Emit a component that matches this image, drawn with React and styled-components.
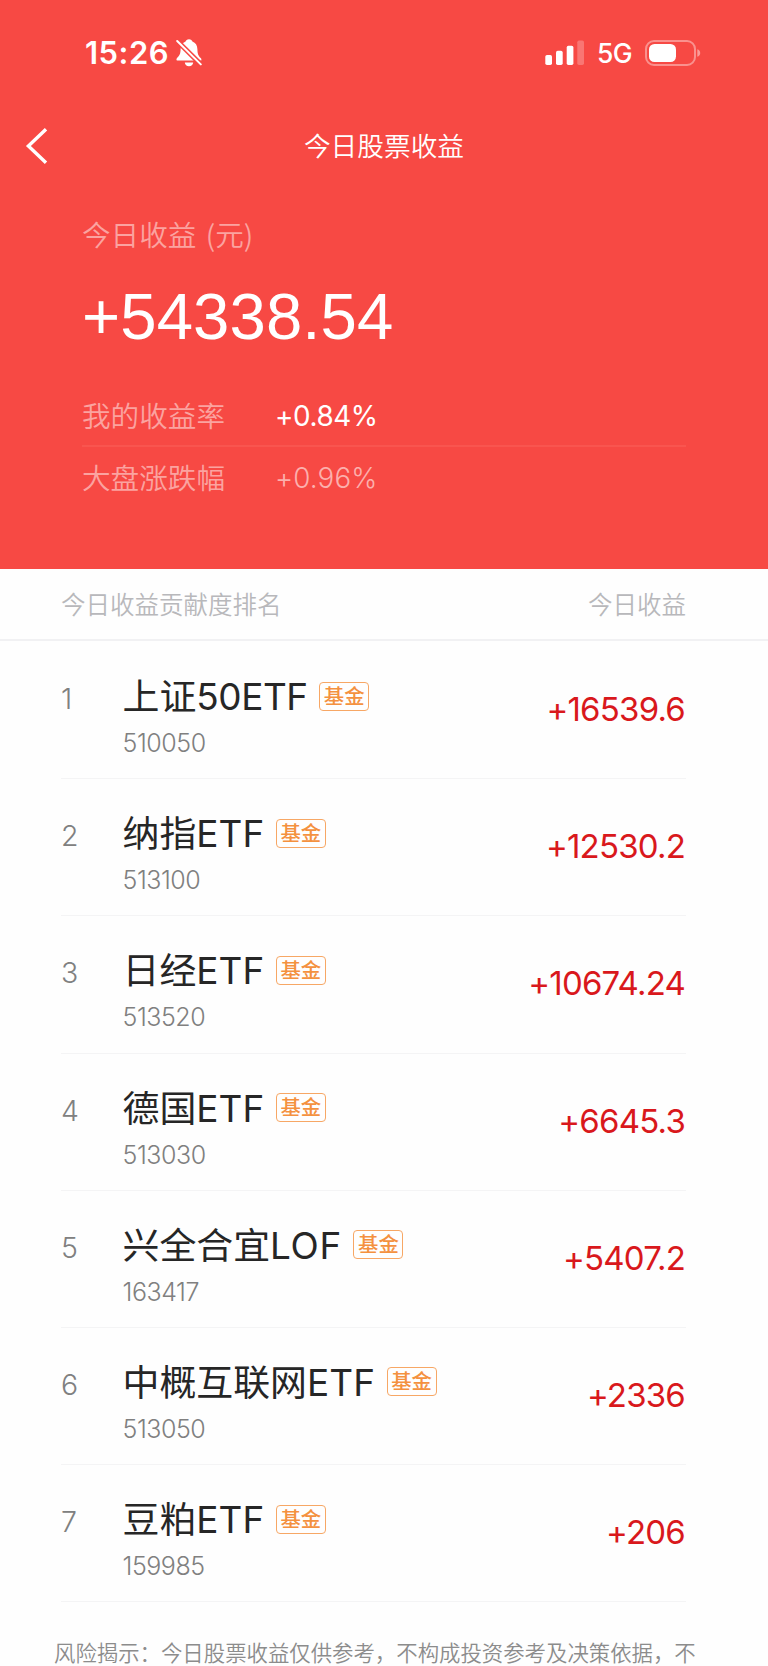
import React from "react";
import styled, { createGlobalStyle } from "styled-components";

const GlobalStyle = createGlobalStyle`
  * {
    box-sizing: border-box;
  }
  body {
    margin: 0;
    background: #fefefe;
    font-family: Inter, "Noto Sans CJK SC", sans-serif;
    -webkit-font-smoothing: antialiased;
  }
`;

const Screen = styled.div`
  width: 768px;
  height: 1666px;
  overflow: hidden;
  background: #fefefe;
`;

const Hero = styled.header`
  height: 569px;
  background: #f74944;
  color: #fff;
`;

const StatusBar = styled.div`
  display: flex;
  align-items: center;
  height: 105px;
  padding: 0 67px 0 85px;
`;

const Clock = styled.span`
  width: 84px;
  margin-right: 7px;
  font-size: 31px;
  font-weight: 600;
  letter-spacing: 0.5px;
  line-height: 36px;
  white-space: nowrap;
`;

const StatusRight = styled.div`
  display: flex;
  align-items: center;
  margin-left: auto;
`;

const Network = styled.span`
  width: 36px;
  margin: 1px 12px 0 12px;
  font-size: 26.5px;
  font-weight: 500;
  letter-spacing: -0.6px;
  line-height: 32px;
`;

const NavBar = styled.nav`
  display: grid;
  grid-template-columns: 80px 1fr 80px;
  align-items: center;
  height: 82px;
`;

const BackButton = styled.button`
  display: flex;
  padding: 0 0 0 25px;
  border: 0;
  background: none;
  color: inherit;
`;

const Title = styled.h1`
  margin: -2px 0 0;
  font-family: "Noto Sans CJK SC", sans-serif;
  font-size: 26.7px;
  font-weight: 350;
  line-height: 40px;
  text-align: center;
`;

const Summary = styled.section`
  padding: 26px 82px 0;
`;

const Label = styled.div`
  font-family: "Noto Sans CJK SC", sans-serif;
  font-size: 28.6px;
  font-weight: 350;
  line-height: 42px;
  word-spacing: 3px;
  color: #fba3a0;
`;

const Total = styled.div`
  margin-top: 24px;
  font-family: "Liberation Sans", Arial, sans-serif;
  font-size: 65.3px;
  letter-spacing: 0.1px;
  line-height: 76px;
`;

const RateRow = styled.div`
  display: flex;
  align-items: center;
  height: ${(props) => (props.$first ? "62px" : "61px")};
  border-bottom: ${(props) => (props.$first ? "2px solid #f9554f" : "0")};

  ${Label} {
    margin-top: -1px;
  }
`;

const Rates = styled.div`
  margin-top: 30px;
`;

const RateValue = styled.span`
  margin-top: 1px;
  margin-left: 50px;
  font-size: 27.8px;
  font-weight: ${(props) => (props.$muted ? 300 : 400)};
  letter-spacing: ${(props) => (props.$muted ? "0.1px" : "-0.4px")};
  color: ${(props) => (props.$muted ? "#fcb0ad" : "#fff")};
`;

const ListHeader = styled.div`
  display: flex;
  justify-content: space-between;
  align-items: center;
  height: 72px;
  padding: 0 82px 1px 61px;
  border-bottom: 2px solid #f1f1f3;
  font-family: "Noto Sans CJK SC", sans-serif;
  font-size: 24.5px;
  font-weight: 350;
  color: #b8b8bb;
`;

const List = styled.ul`
  margin: 0;
  padding: 1px 82px 0 61px;
  list-style: none;
`;

const Row = styled.li`
  display: grid;
  grid-template-columns: 61.5px 1fr auto;
  height: 137.2px;
  border-bottom: 1px solid #f4f4f5;
`;

const Rank = styled.span`
  padding-top: 39px;
  font-size: 28.5px;
  font-weight: 300;
  line-height: 36px;
  color: #808080;
`;

const Fund = styled.div`
  padding-top: 29px;
`;

const NameLine = styled.div`
  display: flex;
  align-items: center;
  height: 52px;
`;

const Name = styled.span`
  font-size: 36.9px;
  line-height: 52px;
  color: #262626;
`;

const NameLatin = styled.span`
  letter-spacing: ${(props) => props.$spacing || "0.1px"};
`;

const Tag = styled.span`
  width: 50px;
  height: 29px;
  margin-top: -2px;
  margin-left: 11.5px;
  border: 1.5px solid #f7a765;
  border-radius: 4px;
  font-family: "Noto Sans CJK SC", sans-serif;
  font-size: 20.4px;
  font-weight: 500;
  line-height: 25px;
  text-align: center;
  white-space: nowrap;
  color: #f4913f;
`;

const Code = styled.div`
  margin-top: 4px;
  font-size: 25px;
  font-weight: 300;
  letter-spacing: -0.45px;
  line-height: 32px;
  color: #808080;
`;

const Gain = styled.span`
  padding-top: 47px;
  padding-right: 1px;
  font-size: 33px;
  letter-spacing: -0.8px;
  line-height: 40px;
  color: #d9181c;
`;

const Notice = styled.p`
  margin: 34px 0 0 54px;
  font-family: "Noto Sans CJK SC", sans-serif;
  font-size: 21.4px;
  font-weight: 350;
  line-height: 32px;
  white-space: nowrap;
  color: #8c8c8c;
`;

const funds = [
  { cn: "上证", en: "50ETF", spacing: "-0.4px", code: "510050", gain: "+16539.6" },
  { cn: "纳指", en: "ETF", code: "513100", gain: "+12530.2" },
  { cn: "日经", en: "ETF", code: "513520", gain: "+10674.24" },
  { cn: "德国", en: "ETF", code: "513030", gain: "+6645.3" },
  { cn: "兴全合宜", en: "LOF", spacing: "0.7px", code: "163417", gain: "+5407.2" },
  { cn: "中概互联网", en: "ETF", code: "513050", gain: "+2336" },
  { cn: "豆粕", en: "ETF", code: "159985", gain: "+206" },
];

function BellOff() {
  return (
    <svg width="26" height="28" viewBox="0 0 26 28">
      <path
        fill="#fff"
        d="M13 0.3c1.9 0 3.1 1 3.4 2.3 3.2 1.2 4.9 3.9 5 7.6.1 4.5.8 6.3 3.3 8.8.7.7.8 1.3.6 2.6H1.9C.7 21.6.3 20.9.5 20c.2-.8 1-1.5 1.9-2.5 1.7-1.9 2.1-3.9 2.2-7.3.1-3.7 1.8-6.4 5-7.6C9.9 1.3 11.1.3 13 .3z"
      />
      <path fill="#fff" d="M8.8 23.4h8.4c-.2 2.3-1.9 3.9-4.2 3.9s-4-1.6-4.2-3.9z" />
      <path stroke="#f74944" strokeWidth="5" d="M-1 -0.2L27 27.6" />
      <path stroke="#fff" strokeWidth="2" strokeLinecap="round" d="M1.2 2L24.8 25.4" />
    </svg>
  );
}

function Signal() {
  return (
    <svg width="40" height="26" viewBox="0 0 40 26" fill="#fff">
      <rect x="0.3" y="15" width="6.7" height="10" rx="1.7" />
      <rect x="11" y="10.7" width="6.7" height="14.3" rx="1.7" />
      <rect x="21.7" y="5.7" width="6.7" height="19.3" rx="1.7" />
      <rect x="32.3" y="0.5" width="6.7" height="24.5" rx="1.7" opacity="0.25" />
    </svg>
  );
}

function Battery() {
  return (
    <svg width="56" height="26" viewBox="0 0 56 26">
      <rect
        x="1"
        y="1"
        width="49"
        height="24"
        rx="8"
        fill="none"
        stroke="#fff"
        strokeOpacity="0.4"
        strokeWidth="2"
      />
      <path fill="#fff" fillOpacity="0.45" d="M52.3 9.2c3.9 1 3.9 6.6 0 7.6z" />
      <rect x="4" y="4" width="27" height="18" rx="5.5" fill="#fff" />
    </svg>
  );
}

function BackIcon() {
  return (
    <svg width="24" height="38" viewBox="0 0 24 38">
      <path d="M21 2.2L3.4 19L21 35.8" fill="none" stroke="#fff" strokeWidth="3.4" />
    </svg>
  );
}

function FundRow(props) {
  const { rank, fund } = props;
  return (
    <Row>
      <Rank>{rank}</Rank>
      <Fund>
        <NameLine>
          <Name>
            {fund.cn}
            <NameLatin $spacing={fund.spacing}>{fund.en}</NameLatin>
          </Name>
          <Tag>基金</Tag>
        </NameLine>
        <Code>{fund.code}</Code>
      </Fund>
      <Gain>{fund.gain}</Gain>
    </Row>
  );
}

function App() {
  return (
    <Screen>
      <GlobalStyle />
      <Hero>
        <StatusBar>
          <Clock>15:26</Clock>
          <BellOff />
          <StatusRight>
            <Signal />
            <Network>5G</Network>
            <Battery />
          </StatusRight>
        </StatusBar>
        <NavBar>
          <BackButton aria-label="返回">
            <BackIcon />
          </BackButton>
          <Title>今日股票收益</Title>
        </NavBar>
        <Summary>
          <Label>今日收益 (元)</Label>
          <Total>+54338.54</Total>
          <Rates>
            <RateRow $first>
              <Label>我的收益率</Label>
              <RateValue>+0.84%</RateValue>
            </RateRow>
            <RateRow>
              <Label>大盘涨跌幅</Label>
              <RateValue $muted>+0.96%</RateValue>
            </RateRow>
          </Rates>
        </Summary>
      </Hero>
      <ListHeader>
        <span>今日收益贡献度排名</span>
        <span>今日收益</span>
      </ListHeader>
      <List>
        {funds.map((fund, i) => (
          <FundRow key={fund.code} rank={i + 1} fund={fund} />
        ))}
      </List>
      <Notice>风险揭示：今日股票收益仅供参考，不构成投资参考及决策依据，不</Notice>
    </Screen>
  );
}

export default App;
